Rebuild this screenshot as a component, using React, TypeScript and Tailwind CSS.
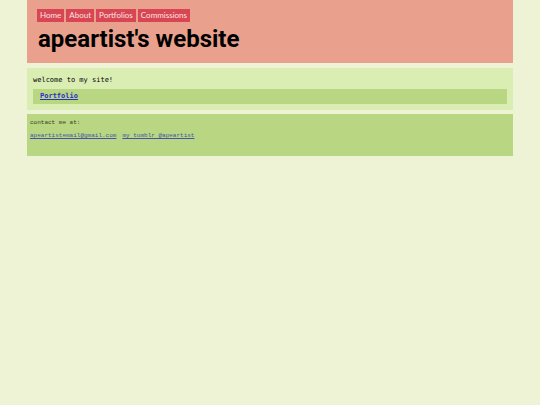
const navLinks = ['Home', 'About', 'Portfolios', 'Commissions'];

function Header() {
    return (
        <header className="bg-[#e9a08c] px-[10px] pt-[9px] pb-2">
            <nav className="flex gap-[2px] font-['Lato',sans-serif] text-[8px] leading-[13px]">
                {navLinks.map((label) => (
                    <a key={label} href="#" className="bg-[#d84654] px-[3px] text-[#fbe4e0]">
                        {label}
                    </a>
                ))}
            </nav>
            <h1 className="pt-[2px] pl-px font-['Roboto',sans-serif] text-[24px] leading-[31px] font-bold text-black">
                apeartist&apos;s website
            </h1>
        </header>
    );
}

export default function App() {
    return (
        <div className="min-h-screen bg-[#eff3d5] px-[5%]">
            <div className="flex flex-col gap-1">
                <Header />
                <main className="mt-px bg-[#daeeb4] px-[6px] pt-[7px] pb-[6px] font-['DejaVu_Sans_Mono',monospace] text-[7px] text-black">
                    <p className="pb-[3px] leading-[11px]">welcome to my site!</p>
                    <div className="bg-[#b9d683] px-[7px] leading-[15px]">
                        <a href="#" className="font-bold text-[#2a2fc4] underline">
                            Portfolio
                        </a>
                    </div>
                </main>
                <footer className="bg-[#b9d683] px-[3px] pt-1 pb-[15px] font-['Liberation_Mono',monospace] text-[6px] text-[#333b22]">
                    <p className="leading-[10px]">contact me at:</p>
                    <div className="flex gap-[6px] pt-[3px] leading-[10px] text-[#4453a8]">
                        <a href="mailto:apeartistemail@gmail.com" className="underline">
                            apeartistemail@gmail.com
                        </a>
                        <a href="#" className="underline">
                            my tumblr @apeartist
                        </a>
                    </div>
                </footer>
            </div>
        </div>
    );
}
